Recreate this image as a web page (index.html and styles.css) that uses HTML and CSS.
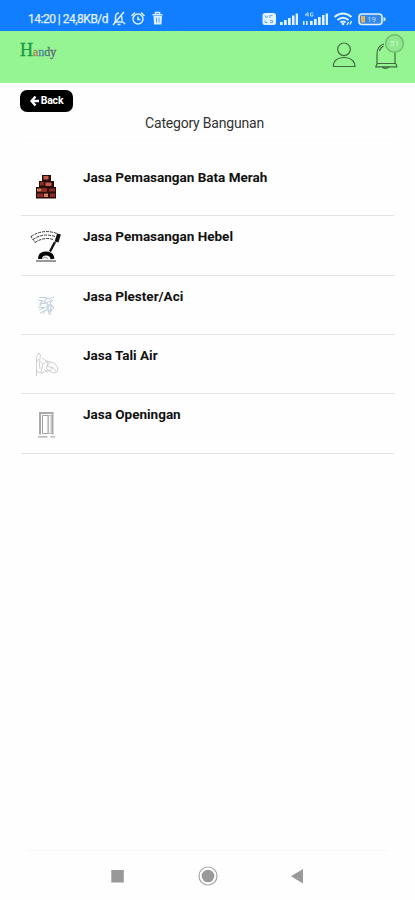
FILE: index.html
```html
<!DOCTYPE html>
<html lang="id">
<head>
<meta charset="utf-8">
<meta name="viewport" content="width=device-width, initial-scale=1">
<title>Category Bangunan</title>
<link rel="stylesheet" href="styles.css">
</head>
<body>
<div class="status">
  <span class="clock">14:20 | 24,8KB/d</span>
  <svg class="status-left" viewBox="110 10 56 18" fill="none" stroke="#d9efff" stroke-width="1.500">
    <path d="M114 22h9M115.500 21v-4q0-3.500 3.500-4M121 15.500q1 1 1 5.500M117.500 24.500h3M113 25l11-13M123 22l2 2"/>
    <circle cx="138" cy="19" r="5"/><path d="M131.500 16l3.500-3.500M141 12.500l3.500 3.500M138 16.500v3h2.500"/>
    <path d="M152.500 14.800h10M155.500 14v-1.500h4V14"/><path d="M153.500 16h8.500l-.5 8.500h-7.500z" fill="#d9efff" stroke="none"/><path d="M156.500 17.500v5M159 17.500v5" stroke="#3b91ff" stroke-width=".8"/>
  </svg>
  <svg class="status-right" viewBox="260 10 128 18">
    <rect x="262.500" y="13" width="13.500" height="12" rx="2.500" fill="#e2f2ff"/>
    <path d="M265 15.500l1.500 2.500 1.500-2.500M270 18v-2.500h2.500M265 20.500v2h2.500M270 20.500h2.500v2H270" stroke="#65a5ef" stroke-width="1" fill="none"/>
    <g fill="#e2f2ff">
      <path d="M280 22h2.700v3H280zM284 20h2.700v5H284zM288 18h2.700v7H288zM292 15.500h2.500v9.500H292zM295.700 13.500h2.300v11.500h-2.300z"/>
      <path d="M303 21h1.500v4H303zM306 21h1.500v4H306zM310 21h2.700v4H310zM314 19h2.700v6H314zM318 17h2.700v8H318zM322 15h2.500v10H322zM325.700 13.500h2.300v11.500h-2.300z"/>
      <path d="M305 15l3-2.500v4M305 15h3.500M313 13h-2.500v3h2.500v-1.500" fill="none" stroke="#b9dcff"/>
    </g>
    <g fill="none" stroke="#e2f2ff" stroke-width="2.100"><path d="M334.500 17q8.500-7 17 0M337.500 20q5.500-4.500 11 0M340.500 22.500q2.500-2 5 0"/><path d="M347 25l1.500-3M350 24.500l1.500-3.500" stroke-width="1.400"/></g>
    <circle cx="343" cy="24" r="1.300" fill="#e2f2ff"/>
    <rect x="359" y="14" width="23" height="10.500" rx="3" fill="#3288eb" stroke="#e2f2ff" stroke-width="1.600"/>
    <rect x="361" y="16" width="4" height="6.500" fill="#e8af55"/>
    <path d="M383.500 17v4.500l2-1v-2.500z" fill="#e2f2ff"/>
    <text class="charge" x="367" y="22">19</text>
  </svg>
</div>
<header class="topbar">
  <div class="logo"><span class="l-h">H</span><span class="l-a">a</span><span class="l-n">n</span><span class="l-d">d</span><span class="l-y">y</span></div>
  <svg class="actions" viewBox="330 32 78 40" fill="none" stroke="#40693e" stroke-width="1.200">
    <circle cx="344" cy="49.300" r="6.300"/>
    <path d="M333.500 66.500q-.5-3 1.500-5.500 3.500-3.500 9-3.500t9 3.500q2.200 2.300 2 5.500z"/>
    <path d="M377 63.500V54q0-8 7-10M395 53v10.500M379.500 51q1-3.500 4-5M377 63.500h18.500M375 66.800h22.500M376 66l1.500-3M397 66l-1.800-3"/>
    <path d="M382.500 67.200q3.500 2 6.500 0" stroke-width="1.600"/>
    <circle cx="394.500" cy="43.500" r="8.800" fill="#8fe98d" stroke="#72b970" stroke-width="1.400"/>
    <text class="badge" x="394.500" y="45.500">51</text>
  </svg>
</header>
<main class="content">
  <button class="back"><svg viewBox="0 0 10 12"><path d="M5.500 1.500L1.500 6l4 4.500M2 6h7" fill="none" stroke="#fff" stroke-width="2.400"/></svg>Back</button>
  <h1 class="title">Category Bangunan</h1>
  <ul class="list">
    <li class="item">
      <svg viewBox="21 157 52 58">
        <path d="M42 175h9v6h3v6h2v11.500H36V187h3v-6h3z" fill="#280d0b"/>
        <path d="M43.500 176h5v3.500h-5zM45.500 182.500h6v3.500h-6z" fill="#c45d4b"/>
        <path d="M40 182h4v3.500h-4zM42 188h5v4h-5zM37 193.500h6v3.500h-6zM50 193.500h5v3.500h-5zM49 188.500h6v3h-6z" fill="#8d2b25"/>
        <path d="M37 188.500h4.500v3H37zM44 193.500h4v3.500h-4z" fill="#d57965"/>
      </svg>
      <span>Jasa Pemasangan Bata Merah</span>
    </li>
    <li class="item">
      <svg viewBox="21 216.500 52 58" fill="none" stroke="#333">
        <path d="M31 237q12-8 26-3M33 240q10-7 22-3M35 243q9-6 18-3" stroke-dasharray="3 1" stroke-width="1"/>
        <path d="M31 237l4 6" stroke-dasharray="2 1"/>
        <path d="M50 252l5-9.500" stroke="#111" stroke-width="2.300"/>
        <path d="M56.500 242.500l2.500-8" stroke="#111" stroke-width="4"/>
        <path d="M40 259.500q0-5.500 6-5.500t6.500 5.500" stroke="#080808" stroke-width="4"/>
        <path d="M42.500 259l2.500-1.500 3 1.500" stroke="#888"/>
        <path d="M36 261.500h20" stroke="#999" stroke-width="2"/>
      </svg>
      <span>Jasa Pemasangan Hebel</span>
    </li>
    <li class="item">
      <svg viewBox="21 275 52 58" fill="none" stroke="#c0ced9" stroke-width="1">
        <path d="M39 296.500h6l4 1.500 5-2M38 299q5 0 8 3l6-3M39 303l7-1 7 4M38 306l7 1 6-3M40 312l6-3 6 1M47 303l2 10M51 304l-1 10M42 299l-2 6M53 299l-3 3 4 5-4 3M39 309l5-2M43 313l3-4"/>
        <path d="M47 297l-3 4 5 3-2 5" stroke="#d0dce5" stroke-width="1.500"/>
      </svg>
      <span>Jasa Plester/Aci</span>
    </li>
    <li class="item">
      <svg viewBox="21 335 52 58" fill="none" stroke="#c4c4c4" stroke-width=".8">
        <path d="M36.500 376V357l2.500-4 1.500 2-1 6 4 3 3-3 8 2 3.500 5-1 4-4 1-4-3-7 3-6-1.500"/>
        <path d="M39 361l1 8M43 364l-2 8M46 361l2 3-2 4 3 3M50 362l-3 4 6 2 3 3M42 358l6 4M53 367l-4 5M36 362l3-3M44 369l4 4"/>
      </svg>
      <span>Jasa Tali Air</span>
    </li>
    <li class="item">
      <svg viewBox="21 394 52 58" fill="none" stroke="#999">
        <path d="M40 434.500v-21.500h12.500v21.500" stroke="#aaa" stroke-width="2"/>
        <path d="M42.500 433.500v-18h5.500v18z" stroke="#999" fill="#fff" stroke-width=".9"/>
        <path d="M48.500 415.500v18h2.500v-18z" stroke="#aaa" fill="#fff" stroke-width=".8"/>
        <path d="M38 436.800h9.500M50.500 436.800h4.500" stroke="#aaa" stroke-width="1.300"/>
      </svg>
      <span>Jasa Openingan</span>
    </li>
  </ul>
</main>
<nav class="navbar">
  <svg viewBox="0 0 20 20"><path d="M3.300 4h12.500v12.500H3.300z" fill="#989898"/></svg>
  <svg viewBox="0 0 20 20"><circle cx="10" cy="10" r="9" fill="#fff" stroke="#a5a5a5" stroke-width="1.200"/><circle cx="10" cy="10" r="6.300" fill="#999"/></svg>
  <svg viewBox="0 0 20 20"><path d="M15 3v14.500L3 10.200z" fill="#999"/></svg>
</nav>
</body>
</html>
```
FILE: styles.css
```css
* { box-sizing: border-box; }
body {
  margin: 0;
  height: 900px;
  display: flex;
  flex-direction: column;
  background: #fefefe;
  font-family: Roboto, "Liberation Sans", sans-serif;
  overflow: hidden;
}
.status {
  flex: none;
  height: 31px;
  padding: 10px 27px 0 28px;
  display: flex;
  background: #107eff;
}
.clock {
  width: 82px;
  color: #e2f2ff;
  font-size: 12px;
  line-height: 18px;
  letter-spacing: -.5px;
  white-space: nowrap;
  -webkit-text-stroke: .25px #e2f2ff;
}
.status-left { width: 56px; height: 18px; }
.status-right { width: 128px; height: 18px; margin-left: auto; }
.charge { font-size: 8px; fill: #b5d8ff; }
.topbar {
  flex: none;
  height: 52px;
  padding: 1px 7px 0 20px;
  display: flex;
  justify-content: space-between;
  background: #96f593;
}
.logo {
  height: 40px;
  line-height: 36px;
  font-family: "Liberation Serif", serif;
  font-size: 12px;
}
.l-h { font-size: 18px; color: #199b43; -webkit-text-stroke: .4px #199b43; }
.l-a { color: #b28243; -webkit-text-stroke: .3px #b28243; }
.l-n { color: #448caa; -webkit-text-stroke: .3px #448caa; }
.l-d { color: #4e7773; -webkit-text-stroke: .3px #4e7773; }
.l-y { color: #645a78; -webkit-text-stroke: .3px #645a78; }
.actions { width: 78px; height: 40px; }
.badge { font-size: 8px; fill: #d4fad1; stroke: none; text-anchor: middle; }
.content { flex: 1; padding: 7px 21px 0; }
.back {
  display: flex;
  align-items: center;
  justify-content: center;
  gap: 1px;
  width: 53px;
  height: 22px;
  margin-left: -1px;
  padding: 0;
  border: 0;
  border-radius: 7px;
  background: #000;
  color: #fff;
  font: 700 10.5px/22px Roboto, sans-serif;
  letter-spacing: -.2px;
}
.back svg { width: 10px; height: 12px; }
.title {
  margin: 1px 0 0;
  padding-right: 6px;
  height: 27px;
  border-bottom: 1px solid #fafafa;
  color: #333;
  font-size: 14px;
  font-weight: 400;
  line-height: 20px;
  letter-spacing: -.2px;
  text-align: center;
}
.list { margin: 16.8px 0 0; padding: 0; list-style: none; }
.item {
  display: flex;
  height: 59.4px;
  border-bottom: 1px solid #e2e2e2;
  color: #111;
  font-size: 13.5px;
  font-weight: 700;
  line-height: 20px;
}
.item svg { flex: none; width: 52px; height: 58px; }
.item span { padding: 10px 0 0 10px; }
.navbar {
  flex: none;
  height: 50px;
  margin: 0 27px;
  padding-top: 15px;
  border-top: 1px solid #f7f7f7;
  display: flex;
  justify-content: center;
  gap: 70px;
}
.navbar svg { width: 20px; height: 20px; }
```
